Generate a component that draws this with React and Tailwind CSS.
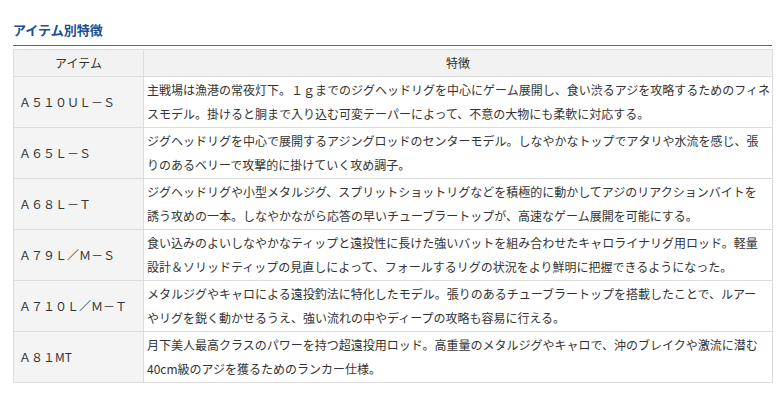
const rows = [
  {
    item: 'Ａ５１０ＵＬ－Ｓ',
    lines: [
      '主戦場は漁港の常夜灯下。１ｇまでのジグヘッドリグを中心にゲーム展開し、食い渋るアジを攻略するためのフィネ',
      'スモデル。掛けると胴まで入り込む可変テーパーによって、不意の大物にも柔軟に対応する。',
    ],
  },
  {
    item: 'Ａ６５Ｌ－Ｓ',
    lines: [
      'ジグヘッドリグを中心で展開するアジングロッドのセンターモデル。しなやかなトップでアタリや水流を感じ、張',
      'りのあるベリーで攻撃的に掛けていく攻め調子。',
    ],
  },
  {
    item: 'Ａ６８Ｌ－Ｔ',
    lines: [
      'ジグヘッドリグや小型メタルジグ、スプリットショットリグなどを積極的に動かしてアジのリアクションバイトを',
      '誘う攻めの一本。しなやかながら応答の早いチューブラートップが、高速なゲーム展開を可能にする。',
    ],
  },
  {
    item: 'Ａ７９Ｌ／Ｍ－Ｓ',
    lines: [
      '食い込みのよいしなやかなティップと遠投性に長けた強いバットを組み合わせたキャロライナリグ用ロッド。軽量',
      '設計＆ソリッドティップの見直しによって、フォールするリグの状況をより鮮明に把握できるようになった。',
    ],
  },
  {
    item: 'Ａ７１０Ｌ／Ｍ－Ｔ',
    lines: [
      'メタルジグやキャロによる遠投釣法に特化したモデル。張りのあるチューブラートップを搭載したことで、ルアー',
      'やリグを鋭く動かせるうえ、強い流れの中やディープの攻略も容易に行える。',
    ],
  },
  {
    item: 'Ａ８１MT',
    lines: [
      '月下美人最高クラスのパワーを持つ超遠投用ロッド。高重量のメタルジグやキャロで、沖のブレイクや激流に潜む',
      '40cm級のアジを獲るためのランカー仕様。',
    ],
  },
]

export default function App() {
  return (
    <div
      className="h-[407px] w-[781px] bg-white pl-[13px] pt-[22px] text-[12px] text-[#333]"
      style={{ fontFamily: '"Noto Sans CJK JP", "Noto Sans", sans-serif' }}
    >
      <h2 className="text-[13px] font-bold leading-[16px] text-[#1d4f91]">アイテム別特徴</h2>
      <div className="mt-[7px] h-px w-[759px] bg-[#666]" />
      <table className="mt-[3px] w-[760px] border-collapse border border-[#dcdcdc]">
        <thead>
          <tr className="bg-[#f2f2f2]">
            <th className="w-[130px] border border-[#dcdcdc] py-px text-center font-normal leading-[24px]">
              アイテム
            </th>
            <th className="border border-[#dcdcdc] py-px text-center font-normal leading-[24px]">特徴</th>
          </tr>
        </thead>
        <tbody>
          {rows.map((row) => (
            <tr key={row.item}>
              <td className="border border-[#dcdcdc] bg-[#f4f4f4] py-px pl-[5px] align-middle leading-[24px] whitespace-nowrap">
                {row.item}
              </td>
              <td className="border border-[#dcdcdc] bg-white py-px pl-[3px] leading-[24px] whitespace-nowrap">
                {row.lines.map((line, i) => (
                  <div key={i}>{line}</div>
                ))}
              </td>
            </tr>
          ))}
        </tbody>
      </table>
    </div>
  )
}
